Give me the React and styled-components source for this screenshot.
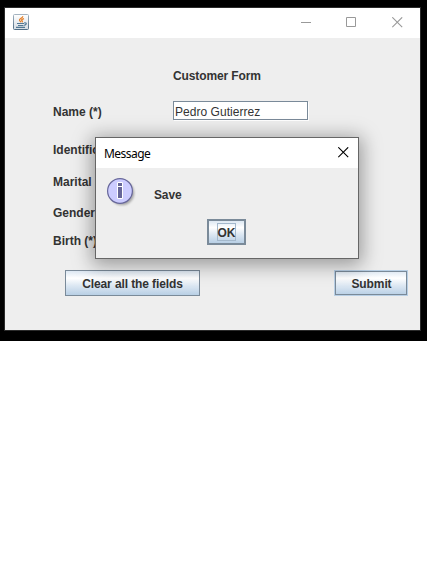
import React from "react";
import styled, { createGlobalStyle, css } from "styled-components";

const Global = createGlobalStyle`
  html, body { margin: 0; background: #fff; }
  * { box-sizing: border-box; }
`;

const Desktop = styled.main`
  position: relative;
  width: 427px;
  height: 341px;
  padding: 7px 0 0 4px;
  background: #000;
  font: bold 12px/16px "Liberation Sans", Arial, sans-serif;
  color: #333;
`;

const Frame = styled.section`
  width: 417px;
  height: 324px;
  border: 1px solid #2b2b2b;
  background: #eee;
  overflow: hidden;
`;

const TitleBar = styled.header`
  display: flex;
  align-items: flex-start;
  height: 30px;
  padding: 6px 17px 0 8px;
  background: #fff;
`;

const WindowControls = styled.div`
  display: flex;
  gap: 34px;
  margin-left: auto;
  padding-top: 3px;

  & > :last-child { margin-left: 1px; }
`;

const Glyph = styled.svg`
  display: block;
  width: ${(p) => p.$size}px;
  height: ${(p) => p.$size}px;
`;

const Form = styled.form`
  display: grid;
  grid-template-columns: 120px 1fr;
  grid-template-rows: 34px 40px 32px 31px 28px 37px 26px;
  padding: 30px 12px 0 48px;
`;

const Heading = styled.h1`
  grid-column: 2;
  margin: 0;
  font: inherit;
  letter-spacing: -0.12px;
  white-space: nowrap;
`;

const Label = styled.label`
  white-space: nowrap;
  padding-top: ${(p) => p.$drop || 0}px;
`;

const RowLabel = styled(Label)`
  grid-column: 1;
`;

const TextField = styled.input`
  width: 135px;
  height: 19px;
  margin-top: -1px;
  padding: 2px 1px 0;
  border: 1px solid #7a8a99;
  border-radius: 0;
  outline: 0;
  box-shadow: 1px 1px 0 #fff;
  background: #fff;
  color: #333;
  font: 12px "Liberation Sans", Arial, sans-serif;
  letter-spacing: 0.04px;
`;

const Actions = styled.div`
  grid-column: 1 / -1;
  display: flex;
  justify-content: space-between;
  padding-left: 12px;
`;

const Button = styled.button`
  display: flex;
  align-items: center;
  justify-content: center;
  width: ${(p) => p.$width}px;
  height: 26px;
  padding: 1px 0 0;
  border: 1px solid #7a8a99;
  border-radius: 0;
  background: linear-gradient(#dde8f3 0%, #fff 30%, #dde8f3 60%, #b8cfe5 100%);
  color: #333;
  font: inherit;
  letter-spacing: -0.1px;
  white-space: nowrap;
  ${(p) => p.$kind === "default" && css`
    padding-left: 1px;
    border-color: #b8cfe5;
    box-shadow: inset 0 0 0 1px #7a8a99;
  `}
  ${(p) => p.$kind === "focused" && css`
    padding: 0;
    border-width: 2px;
  `}
`;

const FocusRing = styled.span`
  display: flex;
  justify-content: center;
  width: 19px;
  height: 18px;
  border: 1px solid #a3b8cc;
  line-height: 18px;
`;

const Dialog = styled.section`
  position: absolute;
  left: 95px;
  top: 137px;
  width: 264px;
  height: 122px;
  border: 1px solid #666;
  background: #eee;
  box-shadow: 0 3px 18px 3px rgba(0, 0, 0, 0.36);
`;

const DialogTitle = styled.header`
  display: flex;
  align-items: center;
  justify-content: space-between;
  height: 30px;
  padding: 0 9px 0 8px;
  background: #fff;
  color: #000;
  font: 12px "Noto Sans", "Open Sans", sans-serif;
  letter-spacing: -0.55px;

  & > svg { margin-bottom: 1px; }
`;

const Message = styled.div`
  display: flex;
  align-items: flex-start;
  gap: 18px;
  height: 51px;
  padding: 9px 0 0 10px;
`;

const MessageText = styled.p`
  margin: 0;
  padding-top: 10px;
  letter-spacing: -0.15px;
`;

const DialogActions = styled.footer`
  display: flex;
  justify-content: center;
  padding-right: 1px;
`;

const JavaIcon = () => (
  <Glyph $size={16} viewBox="0 0 16 16">
    <defs>
      <linearGradient id="tile" x1="0" y1="0" x2="0" y2="1">
        <stop offset="0" stopColor="#fff" />
        <stop offset="1" stopColor="#d5dce3" />
      </linearGradient>
      <linearGradient id="edge" x1="0" y1="0" x2="0" y2="1">
        <stop offset="0" stopColor="#a4b3c0" />
        <stop offset="1" stopColor="#506e86" />
      </linearGradient>
    </defs>
    <rect x=".5" y=".5" width="15" height="15" rx="1" fill="url(#tile)" stroke="url(#edge)" />
    <path d="M9.8 2.2C9.9 4 6.2 4.6 6.5 6.2c.2.9 1 1 1.3 2M11 4.6C7.9 5.4 8.4 6.3 9.2 6.9c.4.5.2.9-.4 1.4" fill="none" stroke="#e57b20" strokeWidth="1.25" />
    <path d="M4 9.5h7M5 11.5h5.5M3 13.4h9M11.2 8.9q2.5-.3 2 1.2-.5 1-2 1.3" fill="none" stroke="#527894" strokeWidth="1.2" />
  </Glyph>
);

const InfoIcon = () => (
  <Glyph $size={30} viewBox="0 0 30 30">
    <defs>
      <filter id="soft" x="-20%" y="-20%" width="140%" height="140%">
        <feGaussianBlur stdDeviation="1.3" />
      </filter>
    </defs>
    <circle cx="16" cy="16" r="12.2" fill="#777" opacity=".6" filter="url(#soft)" />
    <circle cx="14" cy="14" r="12.4" fill="#ccccff" stroke="#666699" strokeWidth="1.2" />
    <path d="M11.5 5.5h5v4h-5zM11.5 9.5h5v12h-5z" fill="#666699" stroke="#fff" />
  </Glyph>
);

const CloseIcon = ({ color }) => (
  <Glyph $size={11} viewBox="0 0 11 11">
    <path d="M.3.3l9.9 9.9M10.2.3l-9.9 9.9" fill="none" stroke={color} strokeWidth="1.1" />
  </Glyph>
);

export default function App() {
  return (
    <>
      <Global />
      <Desktop>
        <Frame>
          <TitleBar>
            <JavaIcon />
            <WindowControls>
              <Glyph $size={11} viewBox="0 0 11 11"><path d="M0 5.5h10" stroke="#999" /></Glyph>
              <Glyph $size={11} viewBox="0 0 11 11"><path d="M.5.5h9v9h-9z" fill="none" stroke="#999" /></Glyph>
              <CloseIcon color="#999" />
            </WindowControls>
          </TitleBar>
          <Form onSubmit={(e) => e.preventDefault()}>
            <Heading>Customer Form</Heading>
            <Label htmlFor="name" $drop={2}>Name (*)</Label>
            <TextField id="name" defaultValue="Pedro Gutierrez" />
            <RowLabel>Identification</RowLabel>
            <RowLabel>Marital status</RowLabel>
            <RowLabel>Gender</RowLabel>
            <RowLabel>Birth (*)</RowLabel>
            <Actions>
              <Button type="button" $width={135}>Clear all the fields</Button>
              <Button type="submit" $width={74} $kind="default">Submit</Button>
            </Actions>
          </Form>
        </Frame>
        <Dialog role="dialog">
          <DialogTitle>Message<CloseIcon color="#000" /></DialogTitle>
          <Message>
            <InfoIcon />
            <MessageText>Save</MessageText>
          </Message>
          <DialogActions>
            <Button type="button" $width={39} $kind="focused"><FocusRing>OK</FocusRing></Button>
          </DialogActions>
        </Dialog>
      </Desktop>
    </>
  );
}
